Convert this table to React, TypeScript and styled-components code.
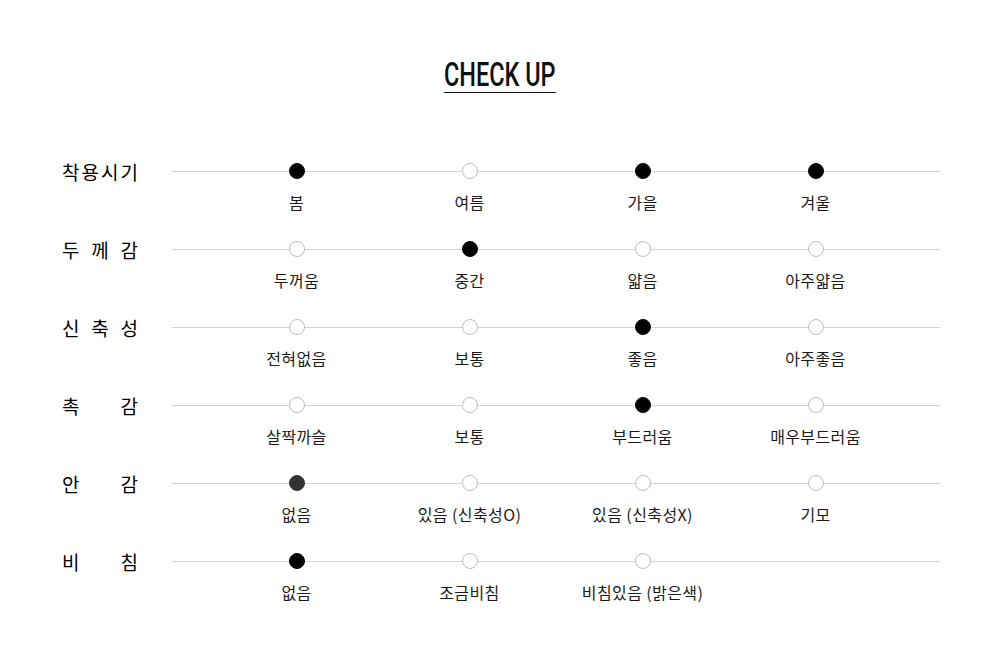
import React from "react";
import styled, { createGlobalStyle } from "styled-components";

type Row = { label: string; options: string[]; checked: number[]; dim?: number[] };

const rows: Row[] = [
  { label: "착용시기", options: ["봄", "여름", "가을", "겨울"], checked: [0, 2, 3] },
  { label: "두께감", options: ["두꺼움", "중간", "얇음", "아주얇음"], checked: [1] },
  { label: "신축성", options: ["전혀없음", "보통", "좋음", "아주좋음"], checked: [2] },
  { label: "촉감", options: ["살짝까슬", "보통", "부드러움", "매우부드러움"], checked: [2] },
  { label: "안감", options: ["없음", "있음 (신축성O)", "있음 (신축성X)", "기모"], checked: [], dim: [0] },
  { label: "비침", options: ["없음", "조금비침", "비침있음 (밝은색)"], checked: [0] },
];

const CheckUp: React.FC = () => {
  return (
    <Page>
      <GlobalStyle />
      <Header>
        <Title>CHECK UP</Title>
      </Header>
      <Table>
        {rows.map((row) => (
          <RowWrap key={row.label}>
            <Label>
              {row.label.split("").map((ch, i) => (
                <span key={i}>{ch}</span>
              ))}
            </Label>
            <Track>
              {row.options.map((opt, i) => (
                <Option key={opt + i}>
                  <Dot
                    $state={
                      row.checked.includes(i) ? "on" : row.dim?.includes(i) ? "dim" : "off"
                    }
                  />
                  <OptionText>{opt}</OptionText>
                </Option>
              ))}
            </Track>
          </RowWrap>
        ))}
      </Table>
    </Page>
  );
};

const GlobalStyle = createGlobalStyle`
  body {
    margin: 0;
    background: #fff;
    font-family: "Noto Sans CJK KR", "Noto Sans", sans-serif;
    color: #111;
  }
`;

const Page = styled.div`
  width: 1000px;
  height: 661px;
  background: #fff;
  overflow: hidden;
`;

const Header = styled.div`
  display: flex;
  justify-content: center;
  align-items: flex-start;
  padding-top: 59px;
  height: 37px;
`;

const Title = styled.h1`
  margin: 0;
  font-family: Roboto, "Liberation Sans", sans-serif;
  font-weight: 500;
  font-size: 34px;
  line-height: 30px;
  color: #111;
  padding-bottom: 3px;
  border-bottom: 1.5px solid #111;
  transform: scaleX(0.69);
  transform-origin: center;
`;

const Table = styled.div`
  margin-top: 67px;
  padding-left: 62px;
  width: 878px;
  display: flex;
  flex-direction: column;
`;

const RowWrap = styled.div`
  display: flex;
  align-items: flex-start;
  height: 78px;
`;

const Label = styled.div`
  width: 76px;
  margin-right: 34px;
  height: 16px;
  display: flex;
  justify-content: space-between;
  align-items: center;
  font-size: 19px;
  font-weight: 400;
  color: #000;
`;

const Track = styled.div`
  position: relative;
  flex: 1;
  display: grid;
  grid-template-columns: repeat(4, 173px);
  padding: 0 38px;

  &::before {
    content: "";
    position: absolute;
    left: 0;
    right: 0;
    top: 7.5px;
    height: 1px;
    background: #d4d4d4;
  }
`;

const Option = styled.div`
  display: flex;
  flex-direction: column;
  align-items: center;
`;

const Dot = styled.span<{ $state: "on" | "off" | "dim" }>`
  position: relative;
  box-sizing: border-box;
  width: 16px;
  height: 16px;
  border-radius: 50%;
  background: ${(p) => (p.$state === "on" ? "#000" : p.$state === "dim" ? "#333" : "#fff")};
  border: 1px solid ${(p) => (p.$state === "off" ? "#bdbdbd" : p.$state === "dim" ? "#333" : "#000")};
`;

const OptionText = styled.span`
  margin-top: 13px;
  font-size: 16px;
  line-height: 20px;
  letter-spacing: 0.4px;
  color: #1a1a1a;
  white-space: nowrap;
`;

export default CheckUp;
